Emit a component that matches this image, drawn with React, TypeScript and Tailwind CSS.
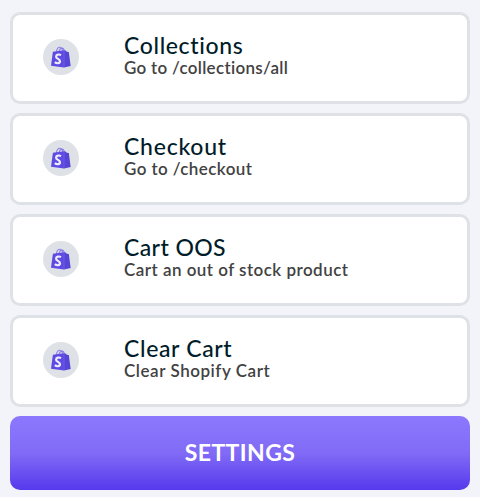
const items = [
  { title: "Collections", text: "Go to /collections/all", titleSpacing: "tracking-[0.65px]", textSpacing: "tracking-[0.3px]" },
  { title: "Checkout", text: "Go to /checkout", titleSpacing: "tracking-[0.75px]", textSpacing: "tracking-[0.42px]" },
  { title: "Cart OOS", text: "Cart an out of stock product", titleSpacing: "tracking-[0.4px]", textSpacing: "tracking-[0.47px]" },
  { title: "Clear Cart", text: "Clear Shopify Cart", titleSpacing: "tracking-[0.65px]", textSpacing: "tracking-[0.55px]" },
];

function BagIcon() {
  return (
    <svg width="30" height="30" viewBox="0 0 30 30" fill="none">
      <path d="M10.3 10.5C10.5 6.8 12.3 5 14 5.2c1.8.2 2.5 2.4 2.6 4.6M13 10c.3-2.2 1.5-3.8 3-3.9 1.2 0 2 1 2.2 2.7" stroke="#8b80ea" strokeWidth="1.1" />
      <path d="M6.9 9.8 18 8.2V25.4L5 23.8z" fill="#5e4be3" />
      <path d="M18 8.2l1.6.2 1.2 1.4 2 .3 1.9 14L18 25.4z" fill="#5745d8" />
      <path d="M18.1 8.5v16.8" stroke="#7c70e6" strokeWidth=".5" />
      <path d="M15 13.1c-2-1.1-4.9-.6-4.9 1.6 0 2.3 3.9 2.1 3.9 4.5 0 2.4-3.2 2.6-5.2 1" stroke="#eeecff" strokeWidth="2.2" />
    </svg>
  );
}

export default function App() {
  return (
    <main className="flex h-[497px] w-[480px] flex-col gap-[9px] bg-[#f3f4f9] px-[10px] pt-3 font-['Lato','Liberation_Sans',sans-serif]">
      {items.map((item) => (
        <section key={item.title} className="flex h-[92px] shrink-0 items-center rounded-[10px] border-[3px] border-[#dee2e6] bg-white pl-[30px]">
          <div className="mb-[2px] flex size-9 shrink-0 items-center justify-center rounded-full bg-[#dee2e6]">
            <BagIcon />
          </div>
          <div className="mb-[3px] ml-[45px] whitespace-nowrap">
            <h2 className={`text-[23px] leading-[23px] font-medium text-[#001c29] ${item.titleSpacing}`}>{item.title}</h2>
            <p className={`text-[17px] leading-[22px] font-semibold text-[#424242] ${item.textSpacing}`}>{item.text}</p>
          </div>
        </section>
      ))}
      <button className="h-[74px] shrink-0 rounded-[10px] bg-[linear-gradient(180deg,#8c78ff_0%,#816bf6_50%,#5639ed_100%)] pb-[2px] text-[23px] font-bold tracking-[0.4px] text-white">
        SETTINGS
      </button>
    </main>
  );
}
